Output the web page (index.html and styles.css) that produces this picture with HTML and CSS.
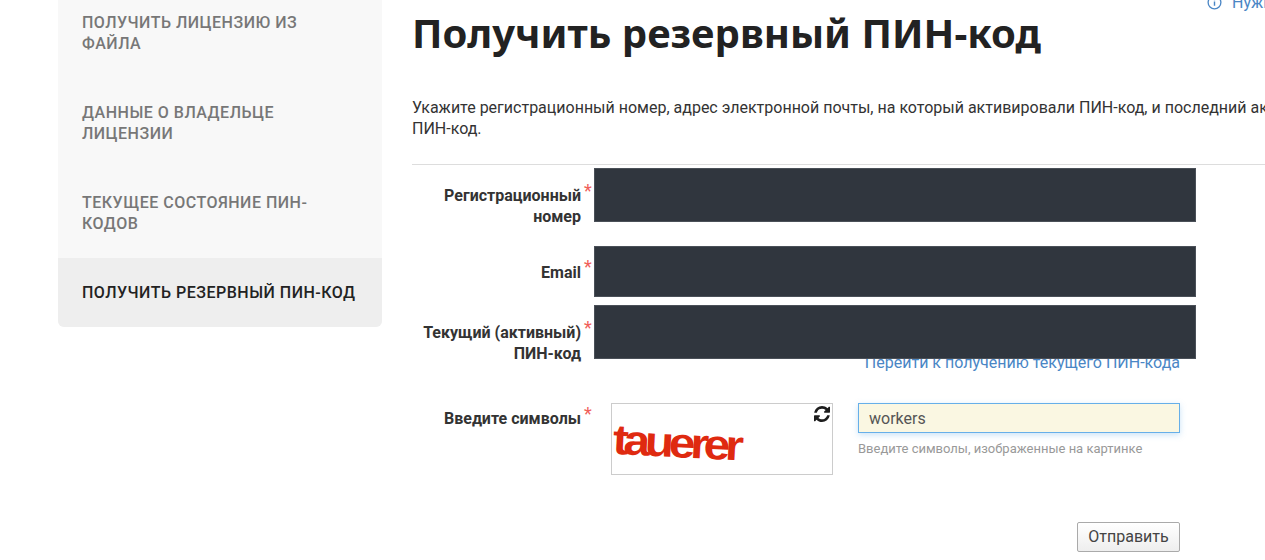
FILE: index.html
```html
<!DOCTYPE html>
<html lang="ru">
<head>
<meta charset="utf-8">
<title>Получить резервный ПИН-код</title>
<link rel="stylesheet" href="styles.css">
</head>
<body>
<div class="page">
  <nav class="side">
    <a class="side-item">Получить лицензию из файла</a>
    <a class="side-item">Данные о владельце лицензии</a>
    <a class="side-item">Текущее состояние ПИН-кодов</a>
    <a class="side-item active">Получить резервный ПИН-код</a>
  </nav>
  <main class="main">
    <div class="help">
      <svg class="help-icon" viewBox="0 0 16 16"><circle cx="8" cy="8" r="6.8" fill="none" stroke="currentColor" stroke-width="1.4"/><path d="M8 6.800v4.700M8 4.200v1.400" stroke="currentColor" stroke-width="1.500" fill="none"/></svg>
      <span>Нужна помощь?</span>
    </div>
    <h1 class="title">Получить резервный ПИН-код</h1>
    <p class="intro">Укажите регистрационный номер, адрес электронной почты, на который активировали ПИН-код, и последний активированный вами<br>ПИН-код.</p>
    <hr class="rule">
    <form class="form">
      <div class="row row-reg">
        <label class="label">Регистрационный номер</label><span class="star">*</span>
        <div class="field"><div class="mask mask-tall"></div></div>
      </div>
      <div class="row row-mail">
        <label class="label">Email</label><span class="star">*</span>
        <div class="field"><div class="mask mask-short"></div></div>
      </div>
      <div class="row row-pin">
        <label class="label">Текущий (активный) ПИН-код</label><span class="star">*</span>
        <div class="field">
          <div class="mask mask-tall"></div>
          <a class="pin-link">Перейти к получению текущего ПИН-кода</a>
        </div>
      </div>
      <div class="row row-captcha">
        <label class="label">Введите символы</label><span class="star">*</span>
        <div class="captcha-wrap">
          <div class="captcha">
            <span class="captcha-word">tauerer</span>
            <svg class="refresh" viewBox="0 0 1536 1536"><path d="M1511 928q0 5-1 7-64 268-268 434.500t-478 166.500q-146 0-282.500-55t-243.500-157l-129 129q-19 19-45 19t-45-19-19-45v-448q0-26 19-45t45-19h448q26 0 45 19t19 45-19 45l-137 137q71 66 161 102t187 36q134 0 250-65t186-179q11-17 53-117 8-23 30-23h192q13 0 22.500 9.500t9.500 22.500zm25-800v448q0 26-19 45t-45 19h-448q-26 0-45-19t-19-45 19-45l138-138q-148-137-349-137-134 0-250 65t-186 179q-11 17-53 117-8 23-30 23h-199q-13 0-22.500-9.500t-9.500-22.500v-7q65-268 270-434.500t480-166.500q146 0 284 55.500t245 156.500l130-129q19-19 45-19t45 19 19 45z"/></svg>
          </div>
          <div class="captcha-input">
            <input class="input" type="text" value="workers">
            <div class="hint">Введите символы, изображенные на картинке</div>
          </div>
        </div>
      </div>
      <div class="actions"><button class="btn" type="button">Отправить</button></div>
    </form>
  </main>
</div>
</body>
</html>
```
FILE: styles.css
```css
html, body {
  margin: 0;
  height: 560px;
  overflow: hidden;
  background: #fff;
}
body {
  font: 16px/21px Roboto, sans-serif;
  color: #333;
}
.page {
  display: flex;
  gap: 30px;
  align-items: flex-start;
  margin-top: -12px;
  padding-left: 58px;
}
.side {
  flex: none;
  width: 324px;
  background: #f8f8f8;
  border-radius: 0 0 6px 6px;
  overflow: hidden;
}
.side-item {
  display: block;
  padding: 24px;
  font-size: 16px;
  font-weight: 500;
  letter-spacing: 0.5px;
  line-height: 21px;
  text-transform: uppercase;
  color: #777;
}
.side-item.active {
  background: #eee;
  color: #222;
}
.main {
  flex: none;
  width: 1200px;
}
.help {
  display: flex;
  align-items: center;
  gap: 10px;
  margin-top: 4px;
  padding-left: 795px;
  color: #4a86c5;
  white-space: nowrap;
}
.help-icon {
  width: 15px;
  height: 15px;
  flex: none;
}
.title {
  margin: -2px 0 0;
  font: 700 40px/44px "Noto Sans", sans-serif;
  color: #222;
}
.intro {
  margin: 42px 0 0;
  color: #333;
}
.rule {
  margin: 25px 0 0;
  border: 0;
  border-top: 1px solid #ddd;
}
.form {
  width: 768px;
  padding-top: 3px;
}
.row {
  display: grid;
  grid-template-columns: 169px 13px 602px;
  align-items: start;
}
.label {
  text-align: right;
  font-weight: 700;
  color: #333;
}
.star {
  padding-left: 3px;
  color: #f0605a;
  font-size: 18px;
  line-height: 21px;
}
.row-reg .label { padding-top: 17px; }
.row-reg .star { padding-top: 12px; }
.row-mail { margin-top: 19px; }
.row-mail .label { padding-top: 16px; }
.row-mail .star { padding-top: 10px; }
.row-pin { margin-top: 8px; }
.row-pin .label { padding-top: 17px; }
.row-pin .star { padding-top: 12px; }
.row-captcha { margin-top: 30px; }
.row-captcha .label { padding-top: 5px; }
.row-captcha .star { padding-top: 0; }
.mask {
  position: relative;
  z-index: 1;
  box-sizing: border-box;
  background: #30363e;
  border: 1px solid #4a5058;
}
.mask-tall { height: 54px; }
.mask-short { height: 51px; }
.pin-link {
  display: block;
  margin-top: -7px;
  padding-right: 16px;
  text-align: right;
  color: #4a86c5;
}
.captcha-wrap {
  display: flex;
  gap: 25px;
  padding-left: 17px;
  width: 569px;
}
.captcha {
  position: relative;
  flex: none;
  box-sizing: border-box;
  width: 222px;
  height: 72px;
  border: 1px solid #ccc;
  overflow: hidden;
}
.captcha-word {
  display: inline-block;
  margin: 13px 0 0 1px;
  font: 700 46px/44px "Liberation Sans", sans-serif;
  letter-spacing: -5px;
  color: #df2a10;
  transform: rotate(3deg) scale(1.04, 0.92);
  transform-origin: 0 50%;
}
.refresh {
  position: absolute;
  top: 2px;
  right: 2px;
  width: 16px;
  height: 16px;
  fill: #1d1d1d;
}
.captcha-input {
  flex: none;
  width: 322px;
}
.input {
  display: block;
  box-sizing: border-box;
  width: 100%;
  height: 30px;
  padding: 0 10px;
  font: 16px Roboto, sans-serif;
  color: #555;
  background: #faf7e2;
  border: 1px solid #66afe9;
  box-shadow: 0 2px 6px rgba(102, 175, 233, 0.35);
  outline: 0;
}
.hint {
  margin-top: 5px;
  font-size: 13px;
  color: #999;
}
.actions {
  display: flex;
  justify-content: flex-end;
  margin-top: 47px;
}
.btn {
  box-sizing: border-box;
  width: 103px;
  height: 30px;
  padding: 0 0 2px;
  font: 16px Roboto, sans-serif;
  color: #444;
  background: linear-gradient(#fff, #eee);
  border: 1px solid #aaa;
  border-radius: 2px;
}
```
